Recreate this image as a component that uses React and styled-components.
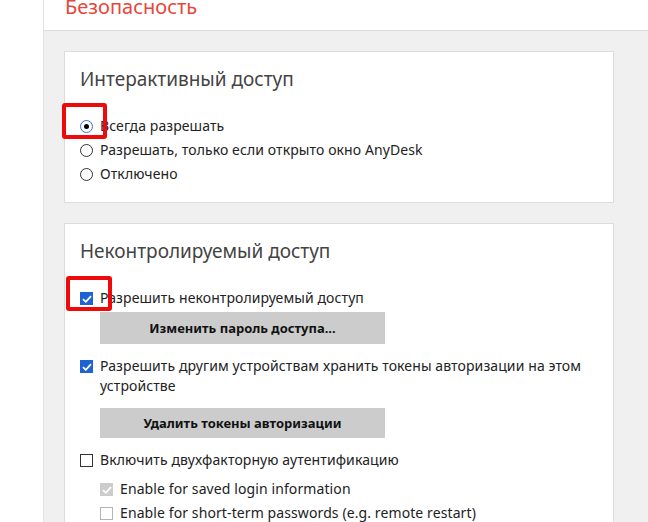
import styled, { createGlobalStyle } from 'styled-components';

const GlobalStyle = createGlobalStyle`
  html, body {
    margin: 0;
    padding: 0;
    background: #ffffff;
  }
  body {
    font-family: 'Noto Sans', 'Open Sans', sans-serif;
    color: #222;
  }
`;

const Window = styled.div`
  display: flex;
  width: 648px;
  height: 522px;
  overflow: hidden;
`;

const SideStrip = styled.div`
  width: 43px;
  flex-shrink: 0;
  background: #fff;
  border-right: 1px solid #e2e2e2;
`;

const Main = styled.div`
  flex: 1;
  display: flex;
  flex-direction: column;
  background: #f0f0f0;
`;

const Header = styled.div`
  height: 30px;
  flex-shrink: 0;
  overflow: hidden;
  background: #fff;
  border-bottom: 1px solid #dcdcdc;
  padding-left: 21px;
`;

const PageTitle = styled.div`
  margin-top: -11px;
  font-size: 20px;
  line-height: 36px;
  color: #e8453c;
`;

const Content = styled.div`
  display: flex;
  flex-direction: column;
  gap: 20px;
  padding: 20px 34px 0 20px;
`;

const Card = styled.section`
  background: #fff;
  border: 1px solid #dcdcdc;
  padding: 14px 16px 16px 15px;
`;

const CardTitle = styled.h2`
  margin: 0 0 22px 0;
  font-size: 19px;
  font-weight: 400;
  line-height: 26px;
  color: #444;
`;

const List = styled.div`
  display: flex;
  flex-direction: column;
`;

const Row = styled.label`
  display: flex;
  align-items: flex-start;
  gap: 7px;
  font-size: 14px;
  letter-spacing: 0.1px;
  line-height: 20px;
  padding: 2px 0;
  margin-top: ${(p) => p.$top || 0}px;
  margin-left: ${(p) => p.$indent || 0}px;
  color: #222;
`;

const Indicator = styled.span`
  position: relative;
  flex-shrink: 0;
  width: 13px;
  height: 13px;
  margin-top: 4px;
  box-sizing: border-box;
`;

const RadioCircle = styled.span`
  width: 13px;
  height: 13px;
  box-sizing: border-box;
  border-radius: 50%;
  border: 1px solid ${(p) => (p.$on ? '#3a6fd8' : '#333')};
  display: flex;
  align-items: center;
  justify-content: center;

  &::after {
    content: '';
    display: ${(p) => (p.$on ? 'block' : 'none')};
    width: 5px;
    height: 5px;
    border-radius: 50%;
    background: #000;
  }
`;

const Box = styled.span`
  display: flex;
  align-items: center;
  justify-content: center;
  width: 13px;
  height: 13px;
  box-sizing: border-box;
  background: ${(p) =>
    p.$on ? (p.$disabled ? '#cccccc' : '#1f62d4') : '#fff'};
  border: 1px solid
    ${(p) =>
      p.$on ? (p.$disabled ? '#cccccc' : '#1f62d4') : p.$disabled ? '#b4b4b4' : '#333'};
`;

const Highlight = styled.span`
  position: absolute;
  left: ${(p) => p.$l}px;
  top: ${(p) => p.$t}px;
  width: ${(p) => p.$w}px;
  height: ${(p) => p.$h}px;
  box-sizing: border-box;
  border: 4px solid #ee0a0a;
  border-radius: 3px;
  pointer-events: none;
`;

const ActionButton = styled.button`
  display: block;
  width: 285px;
  height: ${(p) => p.$h}px;
  margin: ${(p) => p.$top}px 0 0 20px;
  border: none;
  background: #cccccc;
  font-family: inherit;
  font-size: 13px;
  font-weight: 700;
  color: #111;
  cursor: pointer;
`;

const Check = () => (
  <svg width="10" height="8" viewBox="0 0 10 8">
    <path d="M1 4.2 L3.8 6.8 L9 1.2" fill="none" stroke="#fff" strokeWidth="1.8" />
  </svg>
);

function Radio({ on, children, highlight }) {
  return (
    <Row>
      <Indicator>
        <RadioCircle $on={on} />
        {highlight && <Highlight $l={-18} $t={-17} $w={45} $h={36} />}
      </Indicator>
      <span>{children}</span>
    </Row>
  );
}

function Checkbox({ on, disabled, children, highlight, top, indent }) {
  return (
    <Row $top={top} $indent={indent}>
      <Indicator>
        <Box $on={on} $disabled={disabled}>
          {on && <Check />}
        </Box>
        {highlight && <Highlight $l={-14} $t={-16} $w={46} $h={35} />}
      </Indicator>
      <span>{children}</span>
    </Row>
  );
}

export default function App() {
  return (
    <Window>
      <GlobalStyle />
      <SideStrip />
      <Main>
        <Header>
          <PageTitle>Безопасность</PageTitle>
        </Header>
        <Content>
          <Card>
            <CardTitle>Интерактивный доступ</CardTitle>
            <List>
              <Radio on highlight>
                Всегда разрешать
              </Radio>
              <Radio>Разрешать, только если открыто окно AnyDesk</Radio>
              <Radio>Отключено</Radio>
            </List>
          </Card>
          <Card>
            <CardTitle>Неконтролируемый доступ</CardTitle>
            <List>
              <Checkbox on highlight>
                Разрешить неконтролируемый доступ
              </Checkbox>
              <ActionButton $h={32} $top={2}>
                Изменить пароль доступа...
              </ActionButton>
              <Checkbox on top={10}>
                Разрешить другим устройствам хранить токены авторизации на этом
                устройстве
              </Checkbox>
              <ActionButton $h={30} $top={10}>
                Удалить токены авторизации
              </ActionButton>
              <Checkbox top={10}>Включить двухфакторную аутентификацию</Checkbox>
              <Checkbox on disabled indent={20} top={5}>
                Enable for saved login information
              </Checkbox>
              <Checkbox disabled indent={20}>
                Enable for short-term passwords (e.g. remote restart)
              </Checkbox>
            </List>
          </Card>
        </Content>
      </Main>
    </Window>
  );
}
